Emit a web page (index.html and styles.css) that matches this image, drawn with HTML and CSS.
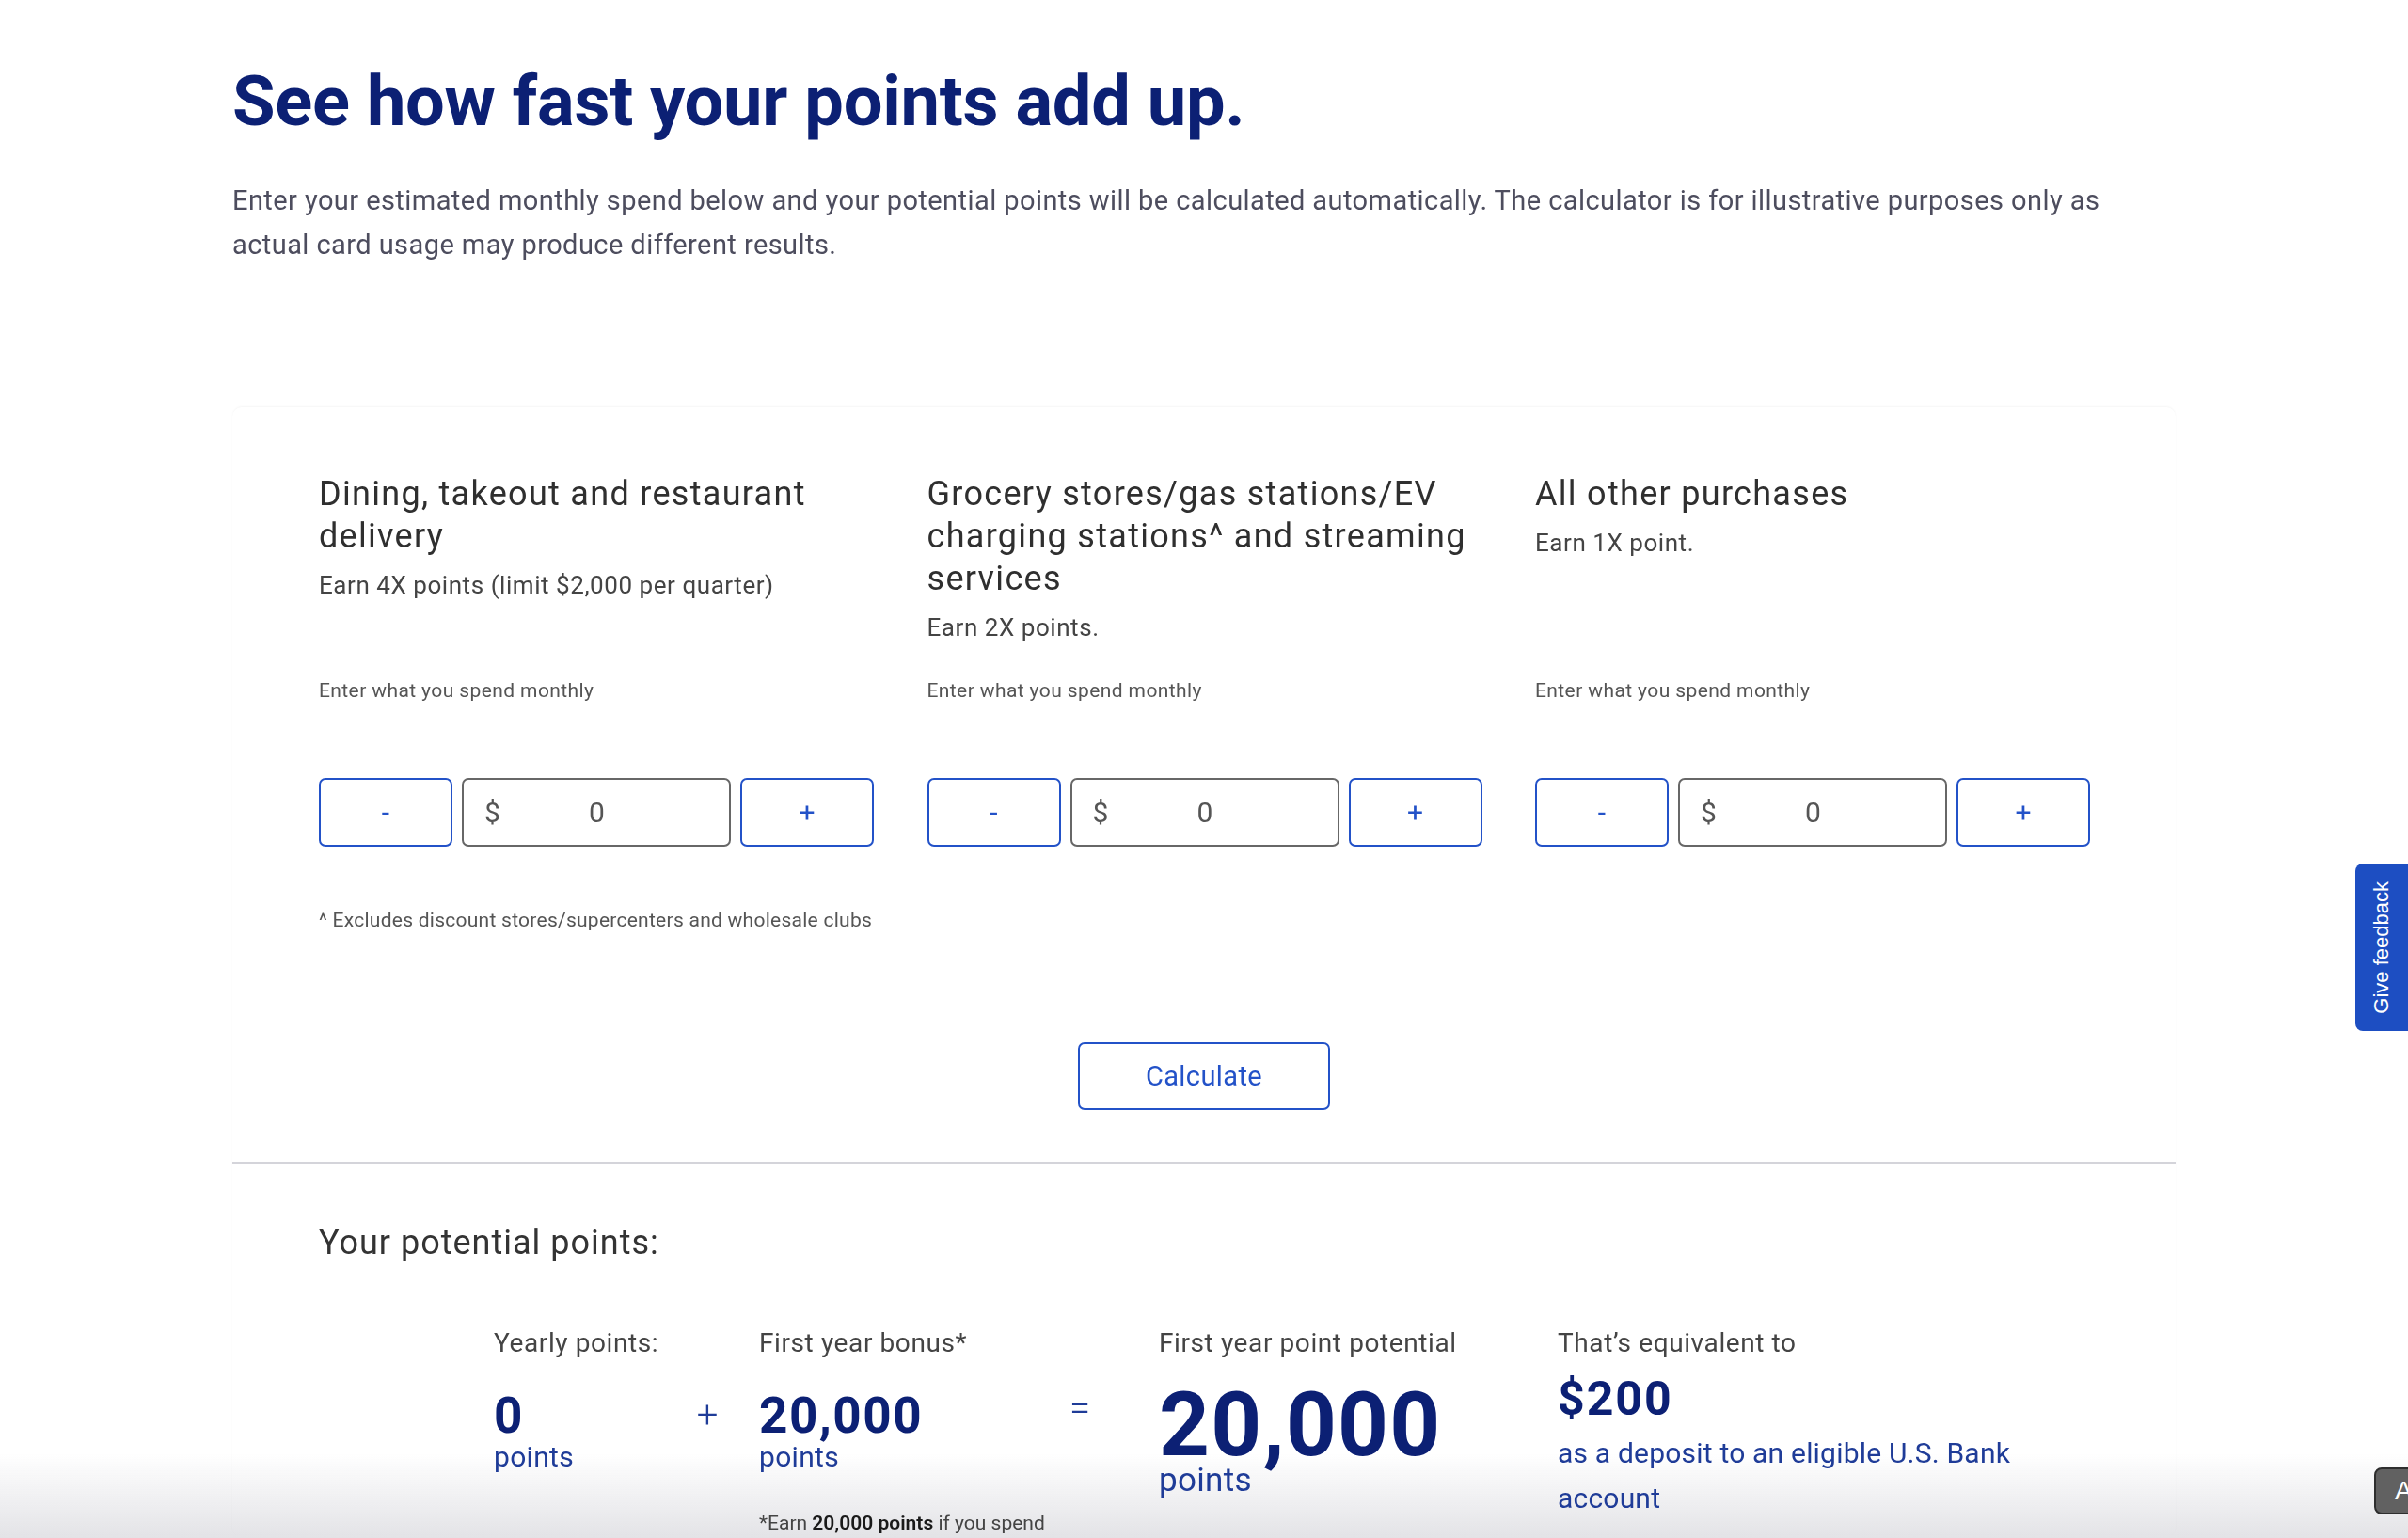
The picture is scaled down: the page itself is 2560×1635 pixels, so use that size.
FILE: index.html
```html
<!DOCTYPE html>
<html lang="en">
<head>
<meta charset="utf-8">
<title>See how fast your points add up.</title>
<link rel="stylesheet" href="styles.css">
</head>
<body>
<main class="page">
  <h1 class="title">See how fast your points add up.</h1>
  <p class="intro">Enter your estimated monthly spend below and your potential points will be calculated automatically. The calculator is for illustrative purposes only as actual card usage may produce different results.</p>

  <section class="card">
    <div class="cols">
      <div class="col">
        <div class="col-head">
          <h3 class="col-title">Dining, takeout and restaurant delivery</h3>
          <p class="col-sub">Earn 4X points (limit $2,000 per quarter)</p>
        </div>
        <p class="col-label">Enter what you spend monthly</p>
        <div class="stepper">
          <button class="step-btn">-</button>
          <div class="field"><span class="cur">$</span><span class="val">0</span></div>
          <button class="step-btn">+</button>
        </div>
        <p class="footnote">^ Excludes discount stores/supercenters and wholesale clubs</p>
      </div>
      <div class="col">
        <div class="col-head">
          <h3 class="col-title">Grocery stores/gas stations/EV charging stations^ and streaming services</h3>
          <p class="col-sub">Earn 2X points.</p>
        </div>
        <p class="col-label">Enter what you spend monthly</p>
        <div class="stepper">
          <button class="step-btn">-</button>
          <div class="field"><span class="cur">$</span><span class="val">0</span></div>
          <button class="step-btn">+</button>
        </div>
      </div>
      <div class="col">
        <div class="col-head">
          <h3 class="col-title">All other purchases</h3>
          <p class="col-sub">Earn 1X point.</p>
        </div>
        <p class="col-label">Enter what you spend monthly</p>
        <div class="stepper">
          <button class="step-btn">-</button>
          <div class="field"><span class="cur">$</span><span class="val">0</span></div>
          <button class="step-btn">+</button>
        </div>
      </div>
    </div>

    <div class="calc-row"><button class="calc">Calculate</button></div>

    <hr class="divider">

    <h3 class="results-title">Your potential points:</h3>

    <div class="results">
      <div class="res res-yearly">
        <p class="res-label">Yearly points:</p>
        <p class="res-num">0</p>
        <p class="res-unit">points</p>
      </div>
      <div class="op op-plus">+</div>
      <div class="res res-bonus">
        <p class="res-label">First year bonus*</p>
        <p class="res-num">20,000</p>
        <p class="res-unit">points</p>
        <p class="res-note">*Earn <b>20,000 points</b> if you spend</p>
      </div>
      <div class="op op-eq">=</div>
      <div class="res res-total">
        <p class="res-label">First year point potential</p>
        <p class="res-big">20,000</p>
        <p class="res-unit res-unit-big">points</p>
      </div>
      <div class="res res-equiv">
        <p class="res-label">That’s equivalent to</p>
        <p class="res-money">$200</p>
        <p class="res-desc">as a deposit to an eligible U.S. Bank account</p>
      </div>
    </div>
  </section>
</main>

<div class="feedback"><span>Give feedback</span></div>
<div class="corner-btn">A</div>
<div class="bottom-fade"></div>
</body>
</html>
```

FILE: styles.css
```css
* { box-sizing: border-box; }
html { background: #fff; }
html, body { margin: 0; padding: 0; }
body {
  font-family: Roboto, "Liberation Sans", Arial, sans-serif;
  color: #333;
  overflow: hidden;
}
p, h1, h3 { margin: 0; }

.page {
  width: 2066px;
  margin: 0 auto;
  padding-top: 63px;
}

.title {
  font-size: 74px;
  line-height: 89px;
  font-weight: 700;
  color: #0c2074;
  letter-spacing: -0.25px;
}

.intro {
  margin-top: 38px;
  font-size: 29px;
  line-height: 47px;
  color: #4d4d5e;
  letter-spacing: 0.43px;
  max-width: 2010px;
}

.card {
  margin-top: 149px;
  border-radius: 10px;
  box-shadow: 0 -1px 2px rgba(0,0,0,0.04);
  padding-top: 70px;
}

.cols {
  display: grid;
  grid-template-columns: repeat(3, 590px);
  column-gap: 56.5px;
  padding: 0 92px;
}

.col-head { min-height: 216px; }

.col-title {
  font-size: 36px;
  line-height: 45px;
  font-weight: 400;
  color: #2f2f2f;
  letter-spacing: 1.3px;
}

.col-sub {
  margin-top: 11px;
  font-size: 26px;
  line-height: 36px;
  color: #444;
  letter-spacing: 0.55px;
}

.col-label {
  font-size: 21px;
  line-height: 30px;
  color: #555;
  letter-spacing: 0.4px;
}

.stepper {
  margin-top: 78px;
  display: grid;
  grid-template-columns: 142px 1fr 142px;
  column-gap: 10px;
  height: 73px;
}

.step-btn {
  background: #fff;
  border: 2px solid #2352c8;
  border-radius: 7px;
  color: #2352c8;
  font-family: Roboto, sans-serif;
  font-size: 30px;
  padding: 0;
}

.field {
  border: 2px solid #676767;
  border-radius: 7px;
  display: flex;
  align-items: center;
  padding-left: 22px;
  font-size: 30px;
  color: #555;
}
.field .val {
  flex: 1;
  text-align: center;
  padding-right: 38px;
}

.footnote {
  margin-top: 63px;
  font-size: 21px;
  line-height: 30px;
  color: #555;
  letter-spacing: 0.26px;
}

.calc-row {
  display: flex;
  justify-content: center;
  margin-top: 115px;
}
.calc {
  width: 268px;
  height: 72px;
  background: #fff;
  border: 2px solid #2352c8;
  border-radius: 7px;
  color: #2352c8;
  font-family: Roboto, sans-serif;
  font-size: 29px;
  letter-spacing: 0.4px;
}

.divider {
  margin: 55px 0 0;
  border: 0;
  height: 2px;
  background: #d4d4da;
}

.results-title {
  margin-top: 61px;
  padding-left: 92px;
  font-size: 36px;
  line-height: 46px;
  font-weight: 400;
  color: #333;
  letter-spacing: 1px;
}

.results {
  margin-top: 66px;
  padding-left: 278px;
  display: flex;
  align-items: flex-start;
}

.res-label {
  font-size: 28px;
  line-height: 36px;
  color: #444;
  letter-spacing: 0.6px;
}

.res-num {
  margin-top: 33px;
  font-size: 53px;
  line-height: 52px;
  font-weight: 700;
  color: #0c2074;
  letter-spacing: 1.5px;
}

.res-unit {
  font-size: 30px;
  line-height: 36px;
  color: #1f3c98;
  letter-spacing: 0.3px;
}

.res-note {
  margin-top: 37px;
  font-size: 21px;
  line-height: 30px;
  color: #444;
}
.res-note b { color: #1a1a1a; font-weight: 600; }

.res-yearly { width: 205px; }
.op {
  width: 44px;
  text-align: center;
  font-size: 40px;
  line-height: 40px;
  font-weight: 300;
  color: #1f3c98;
}
.op-plus { padding-top: 75px; margin-right: 33px; }
.res-bonus { width: 319px; }
.op-eq { padding-top: 67px; margin-right: 62px; }
.res-total { width: 424px; }

.res-big {
  margin-top: 28px;
  font-size: 94px;
  line-height: 82px;
  font-weight: 700;
  color: #0c2074;
  letter-spacing: 1.3px;
}
.res-unit-big {
  font-size: 35px;
}

.res-equiv { width: 520px; }
.res-money {
  margin-top: 18px;
  font-size: 50px;
  line-height: 46px;
  font-weight: 700;
  color: #0c2074;
  letter-spacing: 2px;
}
.res-desc {
  margin-top: 11px;
  font-size: 30px;
  line-height: 48px;
  color: #1f3c98;
  letter-spacing: 0.2px;
}

.feedback {
  position: fixed;
  right: 0;
  top: 918px;
  width: 56px;
  height: 178px;
  background: #1d4ec2;
  border-radius: 8px 0 0 8px;
  display: flex;
  align-items: center;
  justify-content: center;
}
.feedback span {
  writing-mode: vertical-rl;
  transform: rotate(180deg);
  color: #fff;
  font-family: "Liberation Sans", Arial, sans-serif;
  font-size: 22px;
}

.corner-btn {
  position: fixed;
  left: 2524px;
  top: 1560px;
  width: 80px;
  height: 50px;
  background: #616161;
  border: 2px solid #2e2e2e;
  border-radius: 8px;
  color: #fff;
  font-family: "Liberation Sans", Arial, sans-serif;
  font-size: 28px;
  line-height: 46px;
  padding-left: 20px;
}

.bottom-fade {
  position: fixed;
  left: 0;
  right: 0;
  bottom: 0;
  height: 90px;
  z-index: -1;
  background: linear-gradient(to bottom, rgba(225,225,228,0), rgba(222,222,226,0.85));
  pointer-events: none;
}
```
